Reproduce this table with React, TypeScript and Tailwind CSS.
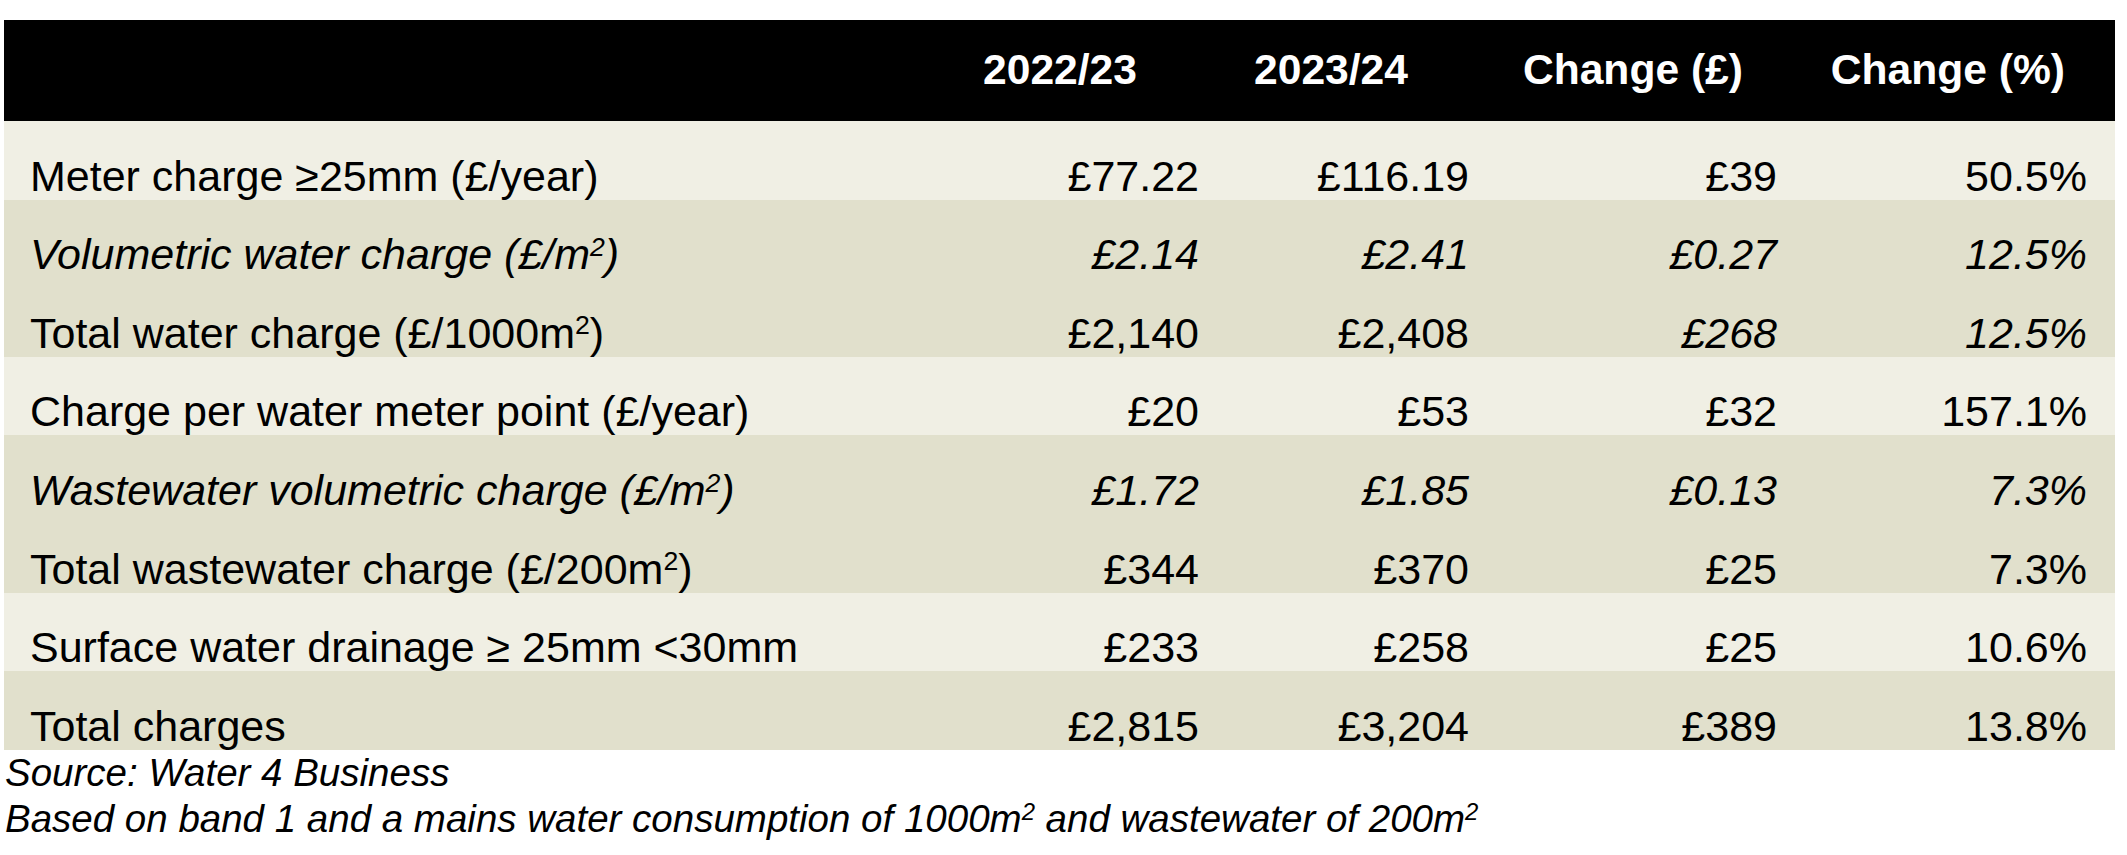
type Row = {
  label: React.ReactNode
  values: string[]
  shade: 'light' | 'dark'
  italicLabel?: boolean
  italicCols?: number[]
}

const M2 = () => <sup className="relative -top-[0.5em] text-[0.62em] leading-none">2</sup>

const rows: Row[] = [
  { label: 'Meter charge ≥25mm (£/year)', values: ['£77.22', '£116.19', '£39', '50.5%'], shade: 'light' },
  {
    label: <>Volumetric water charge (£/m<M2 />)</>,
    values: ['£2.14', '£2.41', '£0.27', '12.5%'],
    shade: 'dark',
    italicLabel: true,
    italicCols: [0, 1, 2, 3],
  },
  {
    label: <>Total water charge (£/1000m<M2 />)</>,
    values: ['£2,140', '£2,408', '£268', '12.5%'],
    shade: 'dark',
    italicCols: [2, 3],
  },
  { label: 'Charge per water meter point (£/year)', values: ['£20', '£53', '£32', '157.1%'], shade: 'light' },
  {
    label: <>Wastewater volumetric charge (£/m<M2 />)</>,
    values: ['£1.72', '£1.85', '£0.13', '7.3%'],
    shade: 'dark',
    italicLabel: true,
    italicCols: [0, 1, 2, 3],
  },
  {
    label: <>Total wastewater charge (£/200m<M2 />)</>,
    values: ['£344', '£370', '£25', '7.3%'],
    shade: 'dark',
  },
  { label: 'Surface water drainage ≥ 25mm <30mm', values: ['£233', '£258', '£25', '10.6%'], shade: 'light' },
  { label: 'Total charges', values: ['£2,815', '£3,204', '£389', '13.8%'], shade: 'dark' },
]

// header text sits at its own right offset in each column
const headers = [
  { text: '2022/23', pad: 'pr-[90px]' },
  { text: '2023/24', pad: 'pr-[89px]' },
  { text: 'Change (£)', pad: 'pr-[62px]' },
  { text: 'Change (%)', pad: 'pr-[50px]' },
]

export default function App() {
  return (
    <div
      className="w-[2127px] h-[855px] bg-white text-black overflow-hidden"
      style={{ fontFamily: '"Liberation Sans", Arial, sans-serif' }}
    >
      <div className="pt-[20px] pl-[4px]">
        <div className="w-[2111px]">
          {/* Header */}
          <div className="grid grid-cols-[953px_270px_270px_308px_310px] h-[101px] bg-black text-white font-bold text-[42.6px] leading-[43px]">
            <div />
            {headers.map((h) => (
              <div key={h.text} className={`flex items-start justify-end pt-[28px] whitespace-nowrap ${h.pad}`}>
                {h.text}
              </div>
            ))}
          </div>

          {/* Body rows */}
          {rows.map((r, i) => (
            <div
              key={i}
              className={`grid grid-cols-[953px_270px_270px_308px_310px] h-[78.6px] text-[43px] leading-[43px] ${
                r.shade === 'light' ? 'bg-[#f0efe4]' : 'bg-[#e1e0cc]'
              }`}
            >
              <div className={`flex items-end pl-[26px] pb-[2px] whitespace-nowrap ${r.italicLabel ? 'italic' : ''}`}>
                <span>{r.label}</span>
              </div>
              {r.values.map((v, j) => (
                <div
                  key={j}
                  className={`flex items-end justify-end pr-[28px] pb-[2px] whitespace-nowrap ${
                    r.italicCols?.includes(j) ? 'italic' : ''
                  }`}
                >
                  {v}
                </div>
              ))}
            </div>
          ))}
        </div>
      </div>

      {/* Notes */}
      <div className="pl-[5px] italic text-[38.5px] leading-[46px] whitespace-nowrap">
        <p>Source: Water 4 Business</p>
        <p>
          Based on band 1 and a mains water consumption of 1000m<M2 /> and wastewater of 200m<M2 />
        </p>
      </div>
    </div>
  )
}
